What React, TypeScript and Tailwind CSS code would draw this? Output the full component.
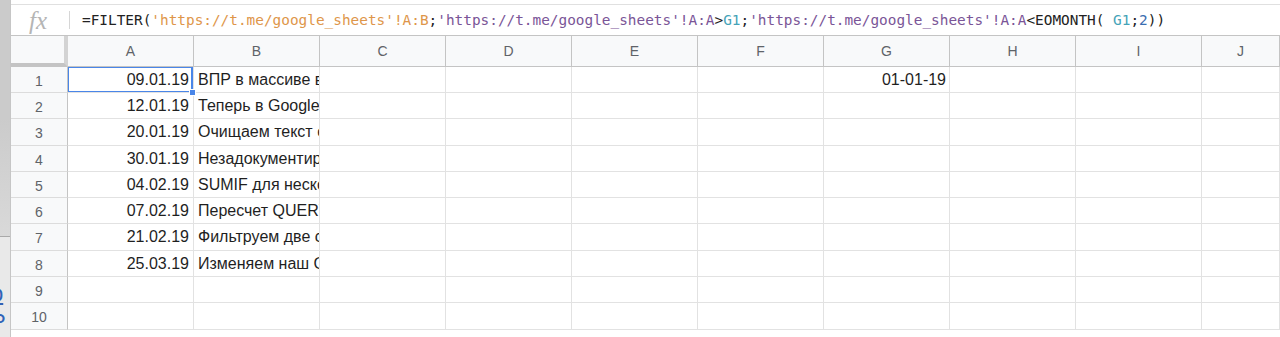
import React from "react";

const COLS = ["A", "B", "C", "D", "E", "F", "G", "H", "I", "J"];

const DATA: [string, string][] = [
  ["09.01.19", "ВПР в массиве в Google Таблицах"],
  ["12.01.19", "Теперь в Google Таблицах"],
  ["20.01.19", "Очищаем текст от лишнего"],
  ["30.01.19", "Незадокументированные функции"],
  ["04.02.19", "SUMIF для нескольких условий"],
  ["07.02.19", "Пересчет QUERY"],
  ["21.02.19", "Фильтруем две colonne"],
  ["25.03.19", "Изменяем наш Google"],
];

// row pitch in the shot is ~26.3px, so every third row is a pixel taller
const ROW_H = ["h-[26px]", "h-[26px]", "h-[27px]", "h-[26px]", "h-[26px]", "h-[26px]", "h-[27px]", "h-[26px]", "h-[26px]", "h-[27px]"];

const ORANGE = "text-[#de964a]";
const PURPLE = "text-[#7a5597]";
const TEAL = "text-[#45a3b8]";

function Formula() {
  const url = "'https://t.me/google_sheets'";
  return (
    <div className="whitespace-nowrap pt-[1px] text-[14.4px] text-[#222] font-['DejaVu_Sans_Mono','Liberation_Mono',monospace]">
      =FILTER(
      <span className={ORANGE}>{url}!A:B</span>;
      <span className={PURPLE}>{url}!A:A</span>&gt;
      <span className={TEAL}>G1</span>;
      <span className={PURPLE}>{url}!A:A</span>&lt;EOMONTH( <span className={TEAL}>G1</span>;
      <span className="text-[#3a6db0]">2</span>))
    </div>
  );
}

function LeftStrip() {
  return (
    <div className="w-[10px] h-full flex flex-col shrink-0 overflow-hidden">
      <div className="h-[237px] bg-linear-to-b from-[#cbcbcb] via-[#cbcbcb] to-[#d9d9d9] border-b border-[#a9a9a9]" />
      <div className="flex-1 bg-[#e9e9e9] flex flex-col pt-[46px] gap-[6px]">
        <span className="ml-[-9px] text-[22px] leading-[22px] text-[#2f63b8] underline font-['Liberation_Sans',sans-serif]">р</span>
        <span className="ml-[-9px] text-[22px] leading-[22px] text-[#2f63b8] font-['Liberation_Sans',sans-serif]">Р</span>
      </div>
    </div>
  );
}

export default function App() {
  return (
    <div className="relative w-[1280px] h-[337px] overflow-hidden flex bg-white font-['Liberation_Sans',Arial,sans-serif]">
      <LeftStrip />

      <div className="flex-1 min-w-0 flex flex-col border-l border-[#c6c6c6]">
        {/* formula bar */}
        <div className="h-[5px] bg-white border-b border-[#e0e0e0] shrink-0" />
        <div className="h-[31px] flex items-center border-b border-[#c4c4c4] shrink-0">
          <span className="w-[58px] pl-[18px] text-[25px] leading-none italic text-[#b5b5b5] font-['Liberation_Serif',serif]">fx</span>
          <span className="w-px h-[18px] bg-[#d6d6d6] mr-[12px]" />
          <Formula />
        </div>

        {/* column header */}
        <div className="grid grid-cols-[57px_repeat(9,126px)_1fr] h-[31px] shrink-0 bg-[#f8f9fa] text-[14px] text-[#5f6368]">
          <div className="bg-[#f8f9fa] border-r-[4px] border-r-[#d3d3d3] border-b-[4px] border-b-[#c4c4c4]" />
          {COLS.map((c) => (
            <div key={c} className="flex items-center justify-center border-r border-b border-[#c4c4c4]">
              {c}
            </div>
          ))}
        </div>

        {/* rows */}
        {ROW_H.map((h, i) => {
          const row = DATA[i];
          return (
            <div key={i} className={`grid grid-cols-[57px_repeat(9,126px)_1fr] shrink-0 ${h}`}>
              <div className="flex items-center justify-center pt-[3px] bg-[#f8f9fa] border-r border-r-[#c4c4c4] border-b border-b-[#dcdcdc] text-[14px] text-[#5f6368]">
                {i + 1}
              </div>
              {COLS.map((c) => (
                <div
                  key={c}
                  className="relative flex items-center border-r border-b border-[#e2e2e2] overflow-hidden whitespace-nowrap text-[16px] text-[#1f1f1f]"
                >
                  {c === "A" && row && <span className="ml-auto pr-[4px]">{row[0]}</span>}
                  {c === "B" && row && <span className="pl-[4px]">{row[1]}</span>}
                  {c === "G" && i === 0 && <span className="ml-auto pr-[3px]">01-01-19</span>}
                  {c === "A" && i === 0 && (
                    <div className="absolute -left-px -top-px right-0 -bottom-px border-2 border-[#4a86e8] pointer-events-none" />
                  )}
                </div>
              ))}
            </div>
          );
        })}
      </div>

      {/* fill handle of the selected cell A1 */}
      <div className="absolute left-[189px] top-[89px] w-[7px] h-[7px] bg-[#4a86e8] border border-white" />
    </div>
  );
}
